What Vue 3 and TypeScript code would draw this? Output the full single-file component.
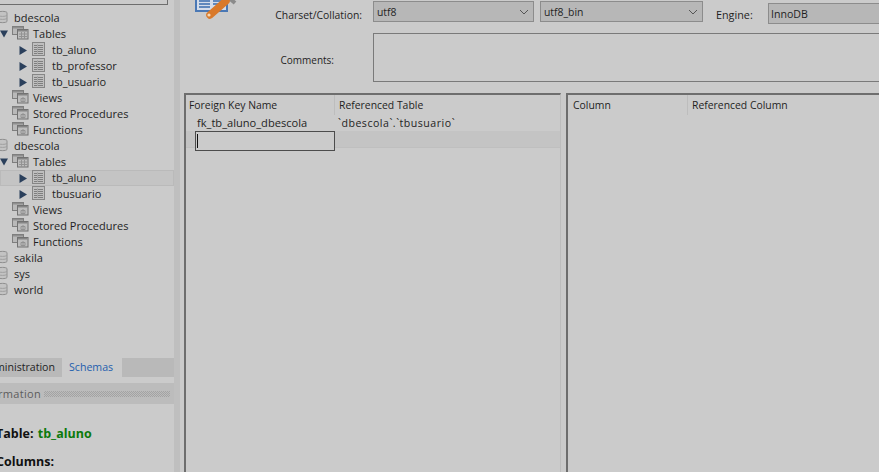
<script setup lang="ts">
type Kind = 'db' | 'folder' | 'table'
interface Row { label: string; kind: Kind; depth: number; arrow?: 'open' | 'closed'; selected?: boolean; sub?: boolean }

const rows: Row[] = [
  { label: 'bdescola', kind: 'db', depth: 0 },
  { label: 'Tables', kind: 'folder', depth: 1, arrow: 'open' },
  { label: 'tb_aluno', kind: 'table', depth: 2, arrow: 'closed' },
  { label: 'tb_professor', kind: 'table', depth: 2, arrow: 'closed' },
  { label: 'tb_usuario', kind: 'table', depth: 2, arrow: 'closed' },
  { label: 'Views', kind: 'folder', depth: 1, sub: true },
  { label: 'Stored Procedures', kind: 'folder', depth: 1, sub: true },
  { label: 'Functions', kind: 'folder', depth: 1, sub: true },
  { label: 'dbescola', kind: 'db', depth: 0 },
  { label: 'Tables', kind: 'folder', depth: 1, arrow: 'open' },
  { label: 'tb_aluno', kind: 'table', depth: 2, arrow: 'closed', selected: true },
  { label: 'tbusuario', kind: 'table', depth: 2, arrow: 'closed' },
  { label: 'Views', kind: 'folder', depth: 1, sub: true },
  { label: 'Stored Procedures', kind: 'folder', depth: 1, sub: true },
  { label: 'Functions', kind: 'folder', depth: 1, sub: true },
  { label: 'sakila', kind: 'db', depth: 0 },
  { label: 'sys', kind: 'db', depth: 0 },
  { label: 'world', kind: 'db', depth: 0 },
]
const gridLines = [3, 5, 7, 9, 11]
</script>

<template>
  <div class="app">
    <aside class="sidebar">
      <div class="search"></div>
      <ul class="tree">
        <li v-for="(r, i) in rows" :key="i" class="row" :class="[`d${r.depth}`, { selected: r.selected }]">
          <svg v-if="r.arrow === 'open'" class="arrow" width="9" height="9" viewBox="0 0 9 9"><path d="M0 0.5h8L4 7.5z" fill="#2b405c" /></svg>
          <svg v-else-if="r.arrow === 'closed'" class="arrow" width="9" height="11" viewBox="0 0 9 11"><path d="M0.5 1l7.5 4.5L0.5 10z" fill="#2b405c" /></svg>

          <svg v-if="r.kind === 'db'" class="ic-db" width="9" height="14" viewBox="0 0 9 14">
            <path d="M-2 2.5C-1 1 6 1 7 2.5v9C6 13 -1 13 -2 11.5z" fill="#c3c3c3" stroke="#8f8f8f" />
            <path d="M-2 5.5c2 1.2 7 1.2 9 0M-2 8.5c2 1.2 7 1.2 9 0" fill="none" stroke="#a0a0a0" />
          </svg>
          <svg v-else-if="r.kind === 'folder'" class="ic-folder" width="17" height="14" viewBox="0 0 17 14">
            <rect x="0.5" y="0.5" width="11" height="8" fill="#b9b9b9" stroke="#7e7e7e" />
            <rect x="1" y="1" width="10" height="1.5" fill="#8f8f8f" />
            <rect x="5.5" y="3.5" width="10.5" height="9.5" fill="#bdbdbd" stroke="#727272" />
            <rect x="6" y="4" width="9.5" height="1.5" fill="#858585" />
            <path v-if="!r.sub" d="M7 8h8M7 10.5h8M9.5 6v7M12.5 6v7" stroke="#929292" />
            <path v-else d="M9 8.5h4v3H9zM11 7v6" fill="none" stroke="#929292" />
          </svg>
          <svg v-else class="ic-table" width="13" height="14" viewBox="0 0 13 14">
            <rect x="0.5" y="0.5" width="12" height="13" fill="#bfbfbf" stroke="#868686" />
            <path v-for="g in gridLines" :key="g" :d="`M2 ${g + 0.5}h9`" stroke="#7f7f7f" />
            <path d="M5.5 2v10" stroke="#a9a9a9" />
          </svg>

          <span class="label">{{ r.label }}</span>
        </li>
      </ul>

      <div class="tabs">
        <div class="tab admin"><span>Administration</span></div>
        <div class="tab schemas">Schemas</div>
      </div>
      <div class="info-head">
        <span class="info-title"><span>Information</span></span>
        <span class="dots"></span>
      </div>
      <div class="info-body">
        <p class="t-line">Table: <b>tb_aluno</b></p>
        <p class="c-line">Columns:</p>
      </div>
    </aside>

    <div class="splitter"></div>

    <main class="main">
      <section class="form">
        <div class="icon-col">
          <svg width="44" height="21" viewBox="0 0 44 21">
            <rect x="1" y="-8" width="31" height="19" fill="#d3dcea" stroke="#4a78b5" stroke-width="2" />
            <path d="M4 1h11M4 4h11M4 7h11M18 1h11M18 4h11" stroke="#5f88bd" stroke-width="2" />
            <path d="M33 -3l7 6" stroke="#8b8b8b" stroke-width="4" />
            <path d="M15 15L31 1" stroke="#d9792a" stroke-width="7.5" stroke-linecap="round" />
            <circle cx="14" cy="15" r="1.6" fill="#f6d9b4" />
          </svg>
        </div>
        <div class="fields">
          <div class="f-row top">
            <label class="lbl cs">Charset/Collation:</label>
            <div class="select s1">utf8
              <svg width="10" height="6" viewBox="0 0 10 6"><path d="M1 1l4 4 4-4" fill="none" stroke="#555" /></svg>
            </div>
            <div class="select s2">utf8_bin
              <svg width="10" height="6" viewBox="0 0 10 6"><path d="M1 1l4 4 4-4" fill="none" stroke="#555" /></svg>
            </div>
            <label class="lbl en">Engine:</label>
            <div class="select s3">InnoDB</div>
          </div>
          <div class="f-row bottom">
            <label class="lbl cm">Comments:</label>
            <div class="comments"></div>
          </div>
        </div>
      </section>

      <section class="panels">
        <div class="panel left">
          <div class="head">
            <div class="h c1">Foreign Key Name</div>
            <div class="h c2">Referenced Table</div>
          </div>
          <div class="fk-row">
            <div class="cell c1 ind">fk_tb_aluno_dbescola</div>
            <div class="cell c2 ref">`dbescola`.`tbusuario`</div>
          </div>
          <div class="new-row">
            <div class="editor"><i class="caret"></i></div>
          </div>
        </div>
        <div class="panel right">
          <div class="head">
            <div class="h c3">Column</div>
            <div class="h c4">Referenced Column</div>
          </div>
        </div>
      </section>
    </main>
  </div>
</template>

<style>
html, body { margin: 0; background: #cbcbcb; overflow: hidden; }
</style>

<style scoped>
.app {
  width: 879px; height: 472px; display: flex; overflow: hidden;
  background: #cbcbcb; color: #1f1f1f;
  font: 11px/16px "Open Sans", "Noto Sans", sans-serif;
}
.sidebar { width: 174px; flex: none; display: flex; flex-direction: column; height: 472px; overflow: hidden; }
.search { height: 5px; width: 168px; flex: none; box-sizing: border-box; border: 1px solid #6e6e6e; border-top: 0; border-left: 0; }
.tree { list-style: none; margin: 5px 0 0; padding: 0; height: 348px; flex: none; }
.row { height: 16px; display: flex; align-items: center; position: relative; box-sizing: border-box; white-space: nowrap; }
.row.selected { background: #c4c4c4; box-shadow: inset 0 0 0 1px #bababa; }
.d0 { padding-left: 0; }
.d1 { padding-left: 12px; }
.d2 { padding-left: 32px; }
.arrow { position: absolute; }
.d1 .arrow { left: 0; top: 4px; }
.d2 .arrow { left: 19px; top: 3px; }
.ic-db { flex: none; margin: -2px 5px 0 0; }
.ic-folder { flex: none; margin: -2px 4px 0 0; }
.ic-table { flex: none; margin: -2px 7px 0 0; }

.tabs { height: 19px; flex: none; display: flex; background: #b9b9b9; }
.tab { display: flex; align-items: center; height: 100%; padding-bottom: 1px; box-sizing: border-box; }
.admin { width: 62px; justify-content: flex-end; padding-right: 7px; overflow: hidden; white-space: nowrap; flex: none; font-size: 10.6px; }
.schemas { width: 60px; background: #cbcbcb; padding-left: 7px; color: #1f5fae; font-size: 10.6px; }
.info-head { margin-top: 6px; height: 21px; background: #bcbcbc; display: flex; align-items: center; flex: none; color: #5c5c5c; box-sizing: border-box; }
.info-title { width: 41px; flex: none; overflow: hidden; display: flex; justify-content: flex-end; white-space: nowrap; letter-spacing: .3px; }
.dots { margin: 0 0 0 3px; width: 126px; height: 6px; background-image: repeating-conic-gradient(#a3a3a3 0 25%, transparent 0 50%); background-size: 2px 2px; }
.info-body { padding-top: 21px; margin-left: -4px; color: #111; font-size: 12.5px; font-weight: 700; }
.info-body p { margin: 0; }
.t-line { line-height: 18px; }
.t-line b { color: #0c7a0c; font-weight: 700; margin-left: 1px; }
.c-line { margin-top: 10px !important; line-height: 18px; }

.splitter { width: 6px; flex: none; background: #bfbfbf; }
.main { flex: 1; min-width: 0; display: flex; flex-direction: column; margin-left: 4px; font-size: 10.4px; }

.form { height: 93px; flex: none; display: flex; }
.icon-col { width: 12px; flex: none; overflow: visible; padding-left: 11px; box-sizing: border-box; }
.fields { flex: 1; min-width: 0; }
.f-row { display: flex; }
.top { height: 33px; padding-top: 1px; box-sizing: border-box; }
.lbl { white-space: nowrap; text-align: right; }
.cs { width: 166px; padding-top: 6px; }
.select {
  box-sizing: border-box; height: 21px; background: #b7b7b7; border: 1px solid #8c8c8c;
  display: flex; align-items: center; justify-content: space-between; padding: 0 4px 0 3px;
}
.select svg { flex: none; }
.s1 { width: 161px; margin-left: 11px; }
.s2 { width: 163px; margin-left: 6px; }
.en { margin-left: 13px; width: 40px; padding-top: 6px; text-align: left; font-size: 10.8px; }
.s3 { flex: 1; margin-left: 12px; margin-top: 2px; padding-left: 2px; margin-right: -1px; font-size: 10.6px; }
.bottom { height: 48px; }
.cm { width: 138px; padding-top: 19px; font-size: 10px; }
.comments { flex: 1; margin-left: 39px; border: 1px solid #7a7a7a; border-right: 0; box-sizing: border-box; height: 49px; }

.panels { flex: 1; min-height: 0; display: flex; gap: 5px; }
.panel { box-sizing: border-box; border: 2px solid #6e6e6e; border-right: 0; border-bottom: 0; }
.left { width: 377px; flex: none; border-right: 1px solid #bdbdbd; }
.right { flex: 1; min-width: 0; }
.head { display: flex; height: 20px; }
.h { box-sizing: border-box; padding-left: 3px; line-height: 20px; border-right: 1px solid #bdbdbd; white-space: nowrap; }
.c1 { width: 149px; flex: none; }
.c2 { flex: 1; padding-left: 4px; }
.left .h.c2 { border-right: 0; }
.c3 { width: 120px; padding-left: 5px; }
.c4 { width: 150px; border-right: 0; padding-left: 4px; }
.fk-row { display: flex; height: 16px; }
.cell { white-space: nowrap; box-sizing: border-box; }
.ind { padding-left: 11px; font-size: 11.1px; }
.ref { padding-left: 3px; font-size: 10.6px; letter-spacing: .5px; }
.new-row { height: 17px; background: #c4c4c4; border-bottom: 1px solid #bfbfbf; box-sizing: border-box; position: relative; }
.editor { position: absolute; left: 9px; top: 0; width: 140px; height: 20px; box-sizing: border-box; border: 1px solid #4c4c4c; background: #cbcbcb; }
.caret { position: absolute; left: 1px; top: 2px; width: 1px; height: 14px; background: #111; }
</style>
